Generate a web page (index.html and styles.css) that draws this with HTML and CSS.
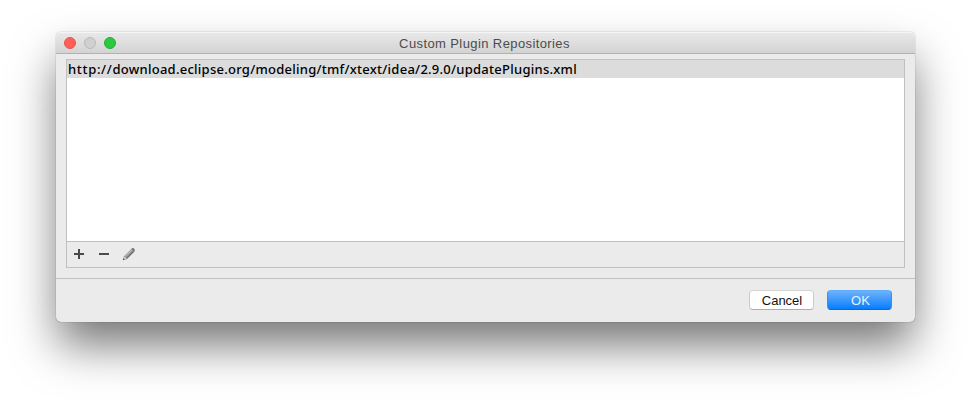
FILE: index.html
```html
<!DOCTYPE html>
<html lang="en">
<head>
<meta charset="utf-8">
<title>Custom Plugin Repositories</title>
<link rel="stylesheet" href="styles.css">
</head>
<body>
<main class="window">
  <header class="titlebar">
    <div class="lights"><span class="light close"></span><span class="light minimize"></span><span class="light maximize"></span></div>
    <h1 class="title">Custom Plugin Repositories</h1>
  </header>
  <section class="content">
    <div class="panel">
      <ul class="list"><li class="row"><span class="url"><span class="scheme">http://</span>download.eclipse.org/modeling/tmf/xtext/idea/2.9.0/updatePlugins.xml</span></li></ul>
      <div class="toolbar">
        <svg class="icon" viewBox="0 0 16 16"><path d="M3 7h10v2H3zM7 3h2v10H7z" fill="#4a4a4a"/></svg>
        <svg class="icon" viewBox="0 0 16 16"><path d="M3 7h10v2H3z" fill="#4a4a4a"/></svg>
        <svg class="icon" viewBox="0 0 16 16">
          <path d="M2.3 13.7l1-3.7 2.7 2.8z" fill="#d8d8d8" stroke="#888" stroke-width=".6"/>
          <path d="M3.3 10l7.3-7.3 2.8 2.8L6 12.8z" fill="#8e8e8e"/>
          <path d="M4.3 10.5l6.9-6.9" stroke="#cfcfcf" stroke-width="1"/>
          <path d="M5.9 12.4l7-7" stroke="#5a5a5a" stroke-width="1"/>
          <path d="M10.5 2.8Q11.8 1.5 13.1 2.7T13.3 5.6z" fill="#666"/>
          <path d="M2 12.3V14h1.7z" fill="#444"/>
        </svg>
      </div>
    </div>
  </section>
  <footer class="footer">
    <button class="button">Cancel</button>
    <button class="button primary">OK</button>
  </footer>
</main>
</body>
</html>
```
FILE: styles.css
```css
* { box-sizing: border-box; }
body {
  margin: 0;
  height: 402px;
  padding: 32px 56px 0;
  overflow: hidden;
  background: #fff;
  font-family: "Liberation Sans", Arial, sans-serif;
}
.window {
  width: 859px;
  height: 290px;
  display: flex;
  flex-direction: column;
  background: #ebebeb;
  border-radius: 5px;
  box-shadow: 0 0 1px rgba(0,0,0,.6), 0 25px 46px -2px rgba(0,0,0,.54);
}
.titlebar {
  height: 22px;
  display: grid;
  grid-template-columns: 1fr auto 1fr;
  align-items: center;
  padding: 0 10px 0 8px;
  background: linear-gradient(#e9e9e9, #d3d3d3);
  border-bottom: 1px solid #b1b1b1;
  border-radius: 5px 5px 0 0;
  box-shadow: inset 0 1px #f5f5f5;
}
.lights { display: flex; gap: 8px; }
.light { width: 12px; height: 12px; border-radius: 50%; border: 1px solid; }
.close { background: #ff5f57; border-color: #e5544e; }
.minimize { background: #d0d0d0; border-color: #b9b9b9; }
.maximize { background: #2bc840; border-color: #24af32; }
.title { margin: 0; padding-top: 3px; font-size: 13px; line-height: 18px; font-weight: 400; color: #4c4c4c; letter-spacing: .4px; white-space: nowrap; }
.content { height: 225px; padding: 5px 10px 11px; border-bottom: 1px solid #c2c2c2; }
.panel { height: 209px; display: flex; flex-direction: column; border: 1px solid #c0c0c0; }
.list { flex: 1; margin: 0; padding: 0; background: #fff; list-style: none; }
.row {
  height: 18px;
  padding-left: 1px;
  background: #dcdcdc;
  color: #000;
  font: 500 13px/18px "Noto Sans", sans-serif;
  white-space: nowrap;
}
.url { letter-spacing: .26px; }
.scheme { letter-spacing: .68px; }
.toolbar { height: 26px; display: flex; gap: 9px; padding: 4px; border-top: 1px solid #c0c0c0; }
.icon { width: 16px; height: 16px; display: block; }
.footer { flex: 1; display: flex; justify-content: flex-end; align-items: flex-start; gap: 13px; padding: 11px 23px 0; }
.button {
  width: 65px;
  height: 20px;
  padding: 1px 0 0 1px;
  border: 1px solid;
  border-color: #d4d4d4 #cbcbcb #adadad;
  border-radius: 4px;
  background: #fff;
  color: #111;
  font: 13px/17px "Liberation Sans", Arial, sans-serif;
}
.primary {
  padding-left: 2px;
  border-color: #62aef8 #3290fa #0667e8;
  background: linear-gradient(#6db3fa, #087dff);
  color: #e9f3ff;
}
```
